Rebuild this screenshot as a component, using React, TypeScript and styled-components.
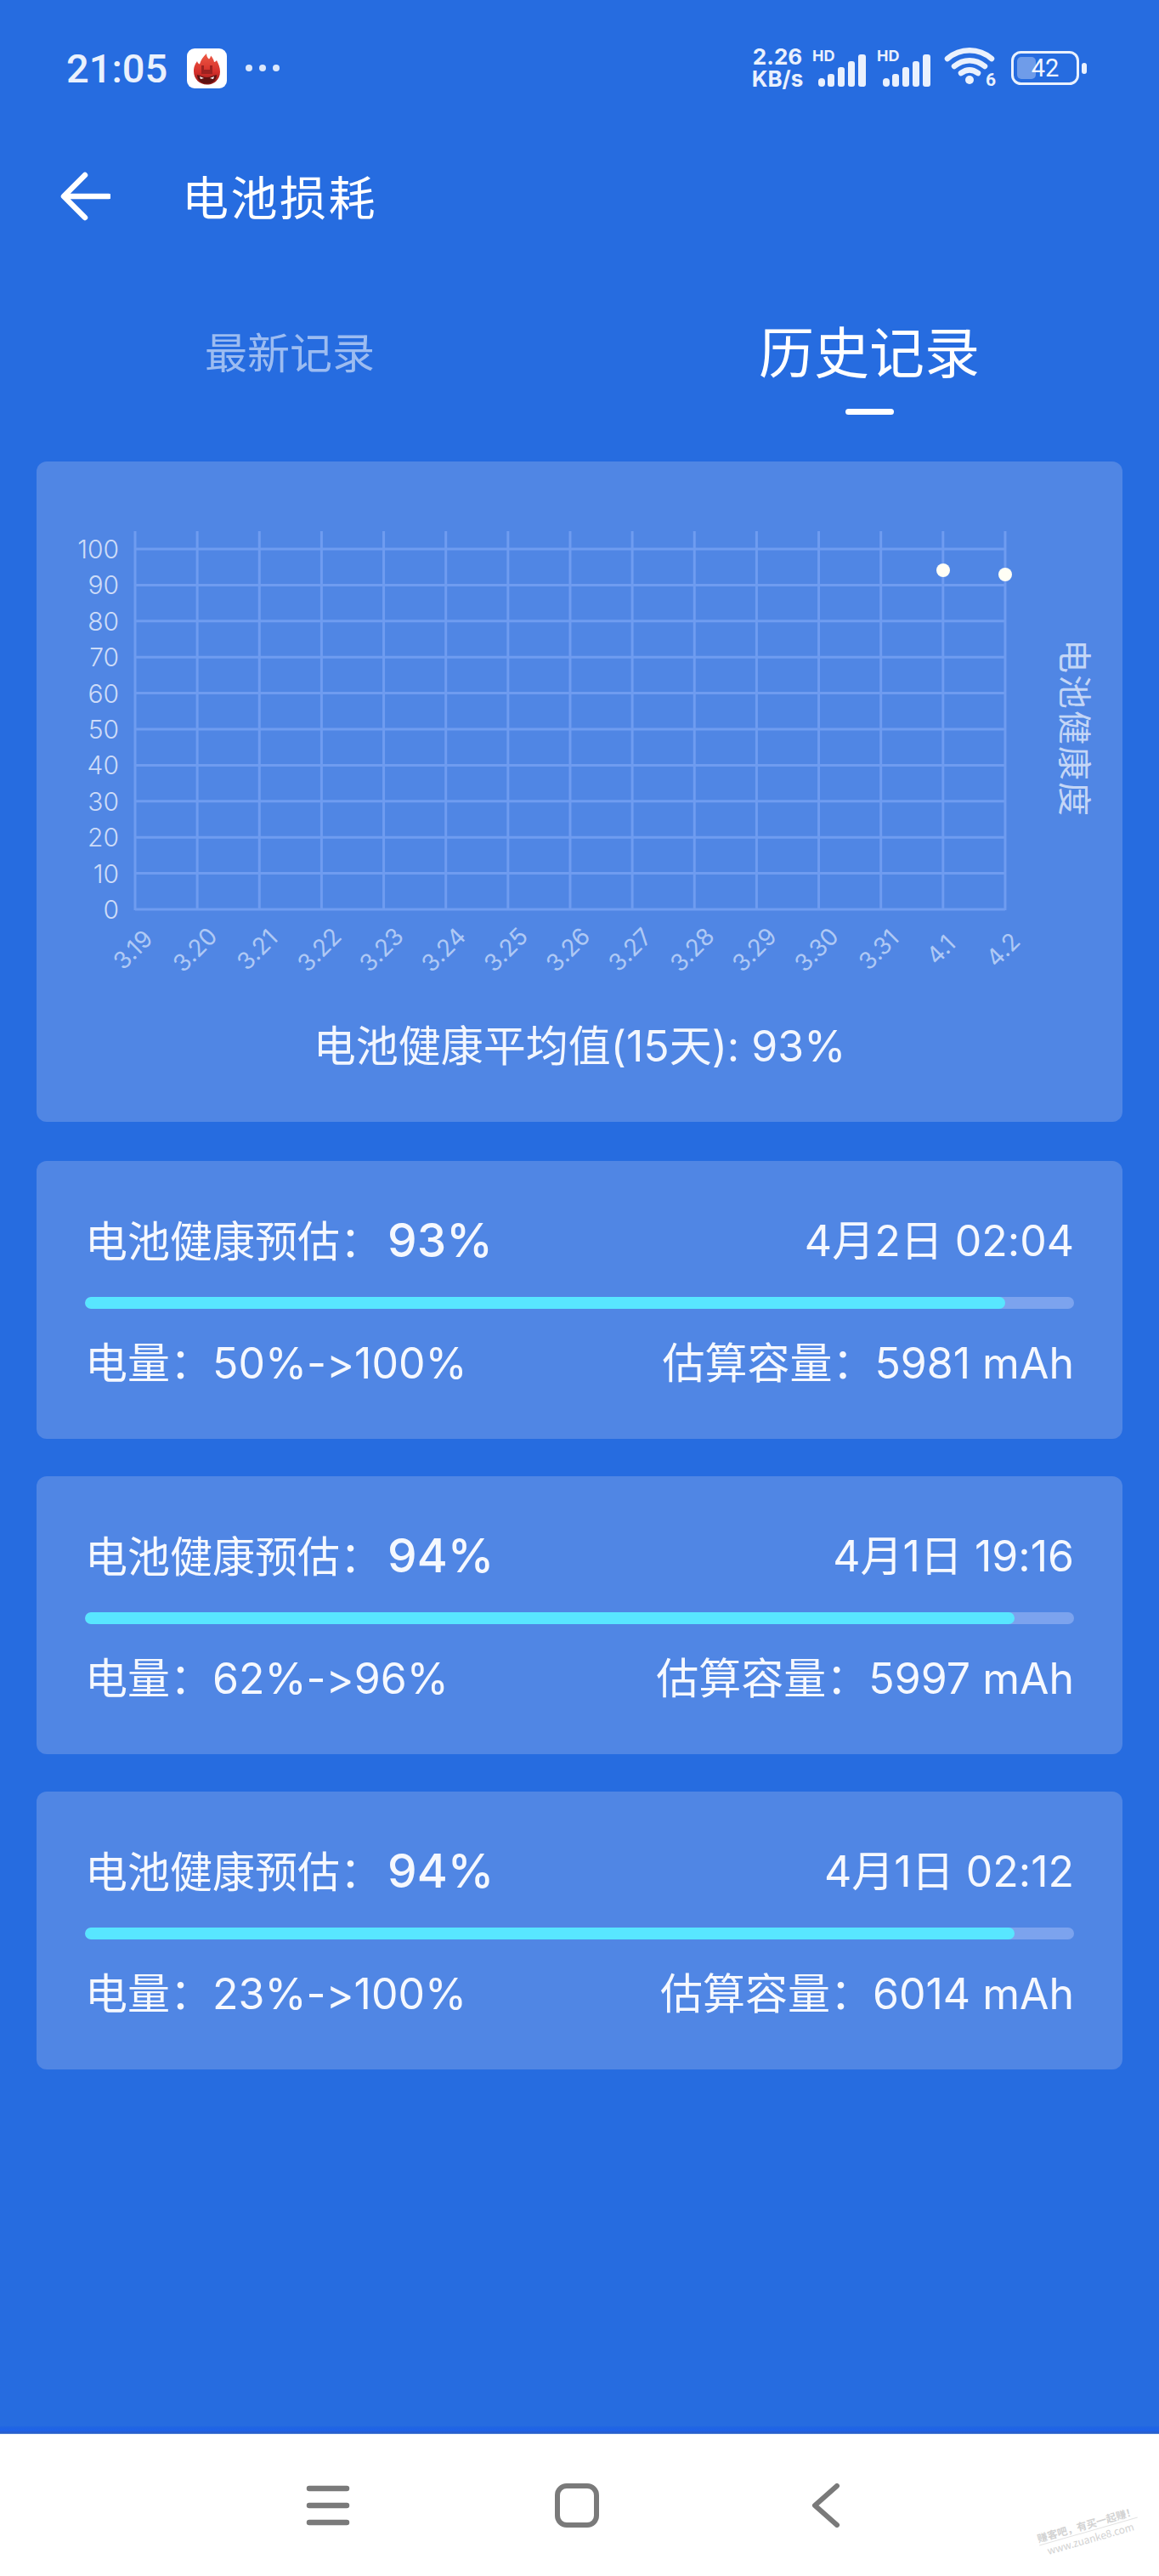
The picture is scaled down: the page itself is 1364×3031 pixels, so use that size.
import React from 'react';
import styled, { createGlobalStyle } from 'styled-components';

const STACK = `Inter, "Noto Sans CJK SC", sans-serif`;

const Global = createGlobalStyle`
  html, body { margin: 0; padding: 0; background: #266ce0; }
  * { box-sizing: border-box; }
`;

const Page = styled.div`
  position: relative;
  width: 1364px;
  height: 3031px;
  display: flex;
  flex-direction: column;
  background: #266ce0;
  color: #fff;
  font-family: ${STACK};
  font-variant-ligatures: none;
  font-feature-settings: "calt" 0, "liga" 0;
  overflow: hidden;
`;

const StatusBar = styled.div`
  height: 160px;
  flex: none;
  display: flex;
  align-items: center;
  padding: 0 84px 0 78px;
  font-family: Roboto, sans-serif;
`;
const Time = styled.span`
  font-size: 47px;
  font-weight: 500;
  color: #eaf1fd;
  line-height: 1;
  width: 142px;
`;
const MoreDots = styled.div`
  display: flex;
  gap: 8px;
  margin-left: 22px;
  flex: 1;
`;
const MoreDot = styled.i`
  width: 8px;
  height: 8px;
  border-radius: 50%;
  background: #dbe7fb;
`;
const Speed = styled.div`
  font-family: Inter, sans-serif;
  font-size: 26px;
  font-weight: 700;
  line-height: 26px;
  color: #eaf1fd;
  width: 66px;
  margin-right: 8px;
  text-align: center;
  white-space: nowrap;
`;
const SignalWrap = styled.div`
  position: relative;
  width: 64px;
  height: 46px;
  margin-right: 12px;
`;
const HD = styled.span`
  position: absolute;
  left: 0;
  top: 0;
  font-family: Inter, sans-serif;
  font-size: 18px;
  font-weight: 700;
  line-height: 1;
  color: #eaf1fd;
`;
const StatusIcon = styled.svg`
  display: block;
  flex: none;
`;
const WifiIcon = styled(StatusIcon)`
  margin: 0 15px 0 3px;
`;

const Header = styled.div`
  height: 142px;
  flex: none;
  display: flex;
  align-items: center;
  padding-left: 70px;
`;
const Title = styled.h1`
  margin: -4px 0 0 84px;
  font-family: "Noto Sans CJK SC", sans-serif;
  font-size: 55px;
  font-weight: 400;
  line-height: 1;
  letter-spacing: 2.5px;
`;

const Tabs = styled.div`
  flex: none;
  height: 241px;
  padding-top: 74px;
  display: grid;
  grid-template-columns: 1fr 1fr;
`;
const Tab = styled.div`
  display: flex;
  flex-direction: column;
  align-items: center;
`;
const TabLabel = styled.span<{ $active?: boolean }>`
  height: 80px;
  line-height: 80px;
  font-size: ${p => (p.$active ? 65 : 50)}px;
  color: ${p => (p.$active ? '#ffffff' : '#9cbcf1')};
  font-weight: 400;
`;
const TabLine = styled.i`
  margin-top: 25px;
  width: 57px;
  height: 7px;
  border-radius: 4px;
  background: #fff;
`;

const Cards = styled.div`
  display: flex;
  flex-direction: column;
  gap: 44px;
  padding: 0 43px;
`;
const Card = styled.section`
  background: #5086e4;
  border-radius: 12px;
`;
const ChartCard = styled(Card)`
  height: 777px;
  margin-bottom: 2px;
`;
const ChartSvg = styled.svg`
  display: block;
  width: 1278px;
  height: 640px;
`;
const Average = styled.div`
  margin-top: 13px;
  height: 70px;
  line-height: 70px;
  text-align: center;
  font-size: 50px;
  color: #f2f6fe;
`;

const RecordCard = styled(Card)`
  height: 327px;
  padding: 64px 57px 0;
`;
const Row = styled.div`
  height: 60px;
  display: flex;
  align-items: center;
  justify-content: space-between;
  font-size: 50px;
  line-height: 60px;
  color: #f5f8fe;
`;
const Percent = styled.b`
  font-size: 55px;
  font-weight: 500;
  margin-left: 6px;
`;
const Track = styled.div`
  margin: 36px 0 34px;
  height: 14px;
  border-radius: 7px;
  background: #7ca3ee;
  overflow: hidden;
`;
const Fill = styled.div`
  height: 100%;
  border-radius: 7px;
  background: #58e6ff;
`;

const NavEdge = styled.div`
  margin-top: auto;
  height: 9px;
  flex: none;
  background: linear-gradient(#2166e2, #1e63e8 50%, #2b5cc6 90%, #7fb2ea);
`;
const Nav = styled.nav`
  height: 167px;
  flex: none;
  background: #fff;
  display: flex;
  align-items: center;
  justify-content: center;
  gap: 233px;
  padding-right: 7px;
`;
const Watermark = styled.div`
  position: absolute;
  left: 1221px;
  top: 2962px;
  width: 120px;
  transform: rotate(-16deg);
  text-align: center;
  font-family: "Noto Sans CJK SC", sans-serif;
  font-size: 12px;
  line-height: 16px;
  color: #d2d2d2;
  white-space: nowrap;
`;
const WatermarkTop = styled.div`
  border-bottom: 1px solid #e2e2e2;
  font-weight: 700;
`;

const Logo = () => (
  <StatusIcon width="47" height="47" viewBox="0 0 47 47">
    <defs>
      <linearGradient id="flame" x1="0" y1="0" x2="0" y2="1">
        <stop offset="0" stopColor="#ee5a45" />
        <stop offset="0.6" stopColor="#d52f2a" />
        <stop offset="1" stopColor="#8c1a1a" />
      </linearGradient>
    </defs>
    <rect width="47" height="47" rx="9" fill="#fff" />
    <path d="M8 27c0-6 2-9 4-12 .5 2 1.500 3 3 3.500C16 14 19 10 23 6c0 3 1 5 3 6.500 1-1 2-2.500 2-4 2 2 3.500 4.500 4 7.500 1 0 2-1 3-2 2 4 4 8 4 13.500 0 9-7 15-15.500 15S8 36 8 27z" fill="url(#flame)" />
    <path d="M12 31c5 1 8 3 11.500 3S30 32 35 31c0 6-5 10.500-11.500 10.500S12 37 12 31z" fill="#5e1212" />
    <path d="M17 20h3v5h7v-5h3v10H17z" fill="#9c2220" />
    <path d="M15 33l5 2-4 1zM32 33l-5 2 4 1z" fill="#fff" />
  </StatusIcon>
);

const SignalIcon = () => (
  <SignalWrap>
    <HD>HD</HD>
    <StatusIcon width="64" height="46" viewBox="0 0 64 46">
      <rect x="7" y="35" width="8" height="10" rx="4" fill="#eaf1fd" />
      <rect x="18" y="30" width="8" height="15" rx="3" fill="#eaf1fd" />
      <rect x="30" y="22" width="8" height="23" rx="3" fill="#eaf1fd" />
      <rect x="42" y="15" width="8" height="30" rx="3" fill="#eaf1fd" />
      <rect x="54" y="7" width="9" height="38" rx="3" fill="#eaf1fd" />
    </StatusIcon>
  </SignalWrap>
);

const Wifi = () => (
  <WifiIcon width="64" height="52" viewBox="0 0 64 52">
    <g fill="none" stroke="#eaf1fd" strokeWidth="6.500" strokeLinecap="round">
      <path d="M4 15C19 2 41 2 56 15" />
      <path d="M12 24c11-9 25-9 36 0" />
      <path d="M20 32c7-5 13-5 20 0" />
    </g>
    <circle cx="30" cy="40" r="5" fill="#eaf1fd" />
    <text x="49" y="47" fontSize="21" fontWeight="700" fill="#eaf1fd" fontFamily="Roboto, sans-serif">6</text>
  </WifiIcon>
);

const Battery = () => (
  <StatusIcon width="90" height="40" viewBox="0 0 90 40">
    <rect x="1.5" y="1.5" width="77" height="37" rx="10" fill="none" stroke="#eaf1fd" strokeWidth="3" />
    <rect x="7" y="7" width="22" height="26" rx="5" fill="#6f9ce9" />
    <text x="40" y="30" textAnchor="middle" fontSize="29" fill="#f2f6fe" fontFamily="Roboto, sans-serif">42</text>
    <rect x="83" y="14" width="6" height="13" rx="3" fill="#eaf1fd" />
  </StatusIcon>
);

const days = ['3.19','3.20','3.21','3.22','3.23','3.24','3.25','3.26','3.27','3.28','3.29','3.30','3.31','4.1','4.2'];
const levels = [100,90,80,70,60,50,40,30,20,10,0];
const X0 = 116, DX = 73.14, Y0 = 103, DY = 42.4;

const Chart = () => (
  <ChartSvg viewBox="0 0 1278 640">
    <g stroke="#6f9cf0" strokeWidth="3">
      {levels.map((l, i) => (
        <line key={l} x1={X0} x2={X0 + DX * 14} y1={Y0 + DY * i} y2={Y0 + DY * i} />
      ))}
      {days.map((d, i) => (
        <line key={d} x1={X0 + DX * i} x2={X0 + DX * i} y1={82} y2={Y0 + DY * 10 + 1} />
      ))}
    </g>
    <g fontFamily="Inter, sans-serif" fontSize="30" fontWeight="300" fill="#cddcf8">
      {levels.map((l, i) => (
        <text key={l} x={97} y={Y0 + DY * i + 11} textAnchor="end">{l}</text>
      ))}
    </g>
    <g fontFamily="Inter, sans-serif" fontSize="28" fontWeight="400" fill="#afc9f5">
      {days.map((d, i) => {
        const x = X0 + DX * i - 2;
        return (
          <text key={d} x={x} y={584} textAnchor="middle" transform={`rotate(-45 ${x} 575)`}>{d}</text>
        );
      })}
    </g>
    <circle cx={1067} cy={128} r={8} fill="#fffef5" />
    <circle cx={1140} cy={133} r={8} fill="#fffef5" />
    <text x={1207} y={314} textAnchor="middle" fontSize="40" fill="#c4d6f6" fontFamily='"Noto Sans CJK SC", sans-serif' fontWeight="400" transform="rotate(90 1207 314)" letterSpacing="2">电池健康度</text>
  </ChartSvg>
);

const records = [
  { pct: 93, date: '4月2日 02:04', range: '50%->100%', cap: '5981 mAh' },
  { pct: 94, date: '4月1日 19:16', range: '62%->96%', cap: '5997 mAh' },
  { pct: 94, date: '4月1日 02:12', range: '23%->100%', cap: '6014 mAh' },
];

export default function App() {
  return (
    <Page>
      <Global />
      <StatusBar>
        <Time>21:05</Time>
        <Logo />
        <MoreDots><MoreDot /><MoreDot /><MoreDot /></MoreDots>
        <Speed>2.26<br />KB/s</Speed>
        <SignalIcon />
        <SignalIcon />
        <Wifi />
        <Battery />
      </StatusBar>
      <Header>
        <StatusIcon width="60" height="58" viewBox="0 0 60 58">
          <path d="M58 29H6M30 4 5 29l25 25" fill="none" stroke="#fff" strokeWidth="6.5" strokeLinecap="round" strokeLinejoin="round" />
        </StatusIcon>
        <Title>电池损耗</Title>
      </Header>
      <Tabs>
        <Tab><TabLabel>最新记录</TabLabel></Tab>
        <Tab><TabLabel $active>历史记录</TabLabel><TabLine /></Tab>
      </Tabs>
      <Cards>
        <ChartCard>
          <Chart />
          <Average>电池健康平均值(15天): 93%</Average>
        </ChartCard>
        {records.map(r => (
          <RecordCard key={r.date}>
            <Row>
              <span>电池健康预估：<Percent>{r.pct}%</Percent></span>
              <span>{r.date}</span>
            </Row>
            <Track><Fill style={{ width: `${r.pct}%` }} /></Track>
            <Row>
              <span>电量：{r.range}</span>
              <span>估算容量：{r.cap}</span>
            </Row>
          </RecordCard>
        ))}
      </Cards>
      <NavEdge />
      <Nav>
        <StatusIcon width="60" height="52" viewBox="0 0 60 52">
          <path d="M8 6h44M8 26h44M8 46h44" stroke="#7a7a7a" strokeWidth="6.5" strokeLinecap="round" />
        </StatusIcon>
        <StatusIcon width="60" height="52" viewBox="0 0 60 52">
          <rect x="7" y="3" width="46" height="46" rx="11" fill="none" stroke="#7a7a7a" strokeWidth="6" />
        </StatusIcon>
        <StatusIcon width="60" height="52" viewBox="0 0 60 52">
          <path d="M43 3 17 26l26 23" fill="none" stroke="#7a7a7a" strokeWidth="6" strokeLinecap="round" strokeLinejoin="round" />
        </StatusIcon>
      </Nav>
      <Watermark>
        <WatermarkTop>赚客吧，有买一起赚！</WatermarkTop>
        www.zuanke8.com
      </Watermark>
    </Page>
  );
}
